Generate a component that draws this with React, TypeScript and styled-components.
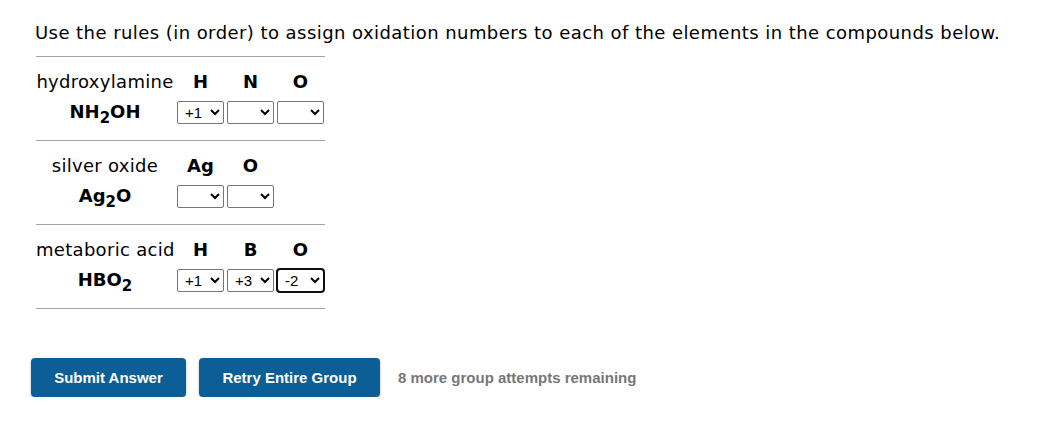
import React from 'react'
import styled, { createGlobalStyle } from 'styled-components'

const Global = createGlobalStyle`
  * {
    box-sizing: border-box;
  }
  body {
    margin: 0;
    background: #fff;
    color: #000;
    font-family: 'DejaVu Sans', Verdana, sans-serif;
  }
`

const Page = styled.div`
  padding: 21px 0 0 35px;
`

const Prompt = styled.p`
  margin: 0 0 11px;
  font-size: 18px;
  line-height: 24px;
  letter-spacing: 0.44px;
`

const Block = styled.div`
  width: 289px;
  margin-left: 1px;
  padding: 14px 0 16px;
  border-top: 1px solid #a3a3a3;

  &:last-of-type {
    border-bottom: 1px solid #a3a3a3;
  }
`

const Grid = styled.div<{ $cols: number }>`
  display: grid;
  grid-template-columns: 138px repeat(${p => p.$cols}, 47px);
  column-gap: 3px;
  row-gap: 7px;
  align-items: center;
`

const Name = styled.div`
  font-size: 18px;
  line-height: 22px;
  letter-spacing: 0.3px;
  text-align: center;
  white-space: nowrap;
`

const Element = styled.div`
  font-size: 18px;
  line-height: 22px;
  font-weight: bold;
  text-align: center;
`

const Formula = styled.div`
  font-size: 18px;
  line-height: 24px;
  font-weight: bold;
  text-align: center;

  sub {
    font-size: 15px;
    line-height: 0;
    vertical-align: -5px;
  }
`

const Select = styled.select<{ $focused?: boolean }>`
  width: 47px;
  height: 23px;
  padding: 0 0 0 3px;
  font-family: 'Liberation Sans', Arial, sans-serif;
  font-size: 15px;
  color: #000;
  background: #fff;
  border: 1px solid #767676;
  border-radius: ${p => (p.$focused ? '3px' : '2px')};
  outline: ${p => (p.$focused ? '2px solid #101010' : 'none')};
  outline-offset: -1px;
`

const Actions = styled.div`
  display: flex;
  align-items: center;
  gap: 13px;
  margin: 49px 0 0 -4px;
`

const Button = styled.button<{ $wide?: boolean }>`
  height: 39px;
  width: ${p => (p.$wide ? '181px' : '155px')};
  border: none;
  border-radius: 4px;
  background: #0b5e96;
  color: #fff;
  font-family: 'Liberation Sans', Arial, sans-serif;
  font-size: 15px;
  font-weight: bold;
  box-shadow: 0 1px 3px rgba(0, 0, 0, 0.25);
`

const Remaining = styled.span`
  margin-left: 5px;
  color: #777;
  font-family: 'Liberation Sans', Arial, sans-serif;
  font-size: 15px;
  font-weight: bold;
`

const options = ['', '+1', '+2', '+3', '+4', '+5', '0', '-1', '-2', '-3']

type Compound = {
  name: string
  formula: React.ReactNode
  elements: string[]
  values: string[]
}

const compounds: Compound[] = [
  {
    name: 'hydroxylamine',
    formula: <>NH<sub>2</sub>OH</>,
    elements: ['H', 'N', 'O'],
    values: ['+1', '', '']
  },
  {
    name: 'silver oxide',
    formula: <>Ag<sub>2</sub>O</>,
    elements: ['Ag', 'O'],
    values: ['', '']
  },
  {
    name: 'metaboric acid',
    formula: <>HBO<sub>2</sub></>,
    elements: ['H', 'B', 'O'],
    values: ['+1', '+3', '-2']
  }
]

function CompoundTable({ compound, last }: { compound: Compound; last: boolean }) {
  const { name, formula, elements, values } = compound
  return (
    <Block>
      <Grid $cols={elements.length}>
        <Name>{name}</Name>
        {elements.map((el, i) => (
          <Element key={i}>{el}</Element>
        ))}
        <Formula>{formula}</Formula>
        {values.map((v, i) => (
          <Select
            key={i}
            defaultValue={v}
            $focused={last && i === values.length - 1}
          >
            {options.map(o => (
              <option key={o} value={o}>
                {o}
              </option>
            ))}
          </Select>
        ))}
      </Grid>
    </Block>
  )
}

export default function App() {
  return (
    <Page>
      <Global />
      <Prompt>
        Use the rules (in order) to assign oxidation numbers to each of the
        elements in the compounds below.
      </Prompt>
      <div>
        {compounds.map((c, i) => (
          <CompoundTable key={c.name} compound={c} last={i === compounds.length - 1} />
        ))}
      </div>
      <Actions>
        <Button>Submit Answer</Button>
        <Button $wide>Retry Entire Group</Button>
        <Remaining>8 more group attempts remaining</Remaining>
      </Actions>
    </Page>
  )
}
